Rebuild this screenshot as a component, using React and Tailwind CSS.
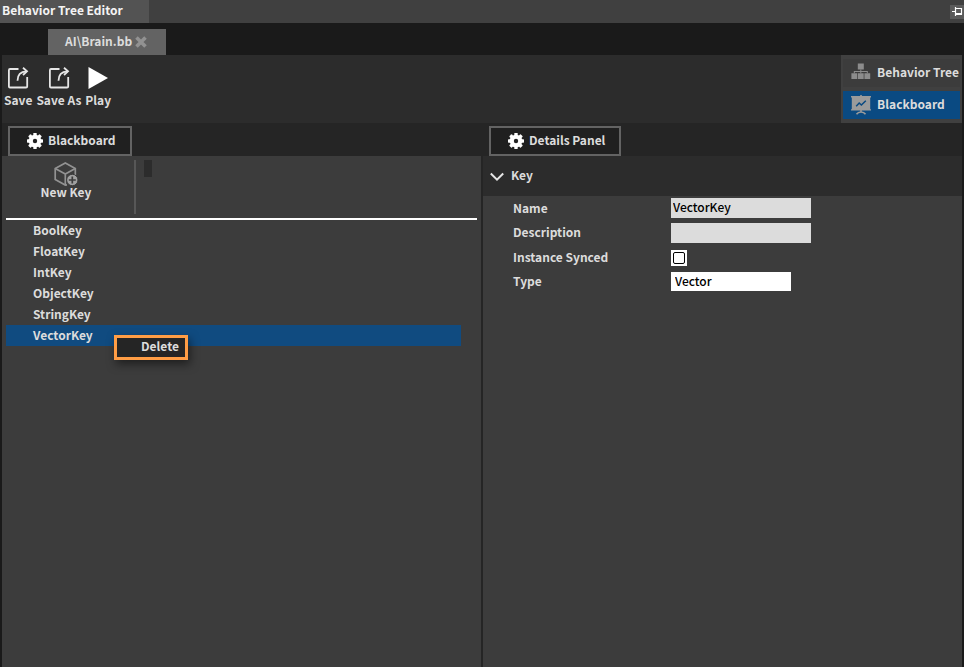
import React, { useState } from 'react'

const keys = ['BoolKey', 'FloatKey', 'IntKey', 'ObjectKey', 'StringKey', 'VectorKey']

const SaveIcon = () => (
  <svg className="w-6 h-6" viewBox="0 0 24 24" fill="none" stroke="#e6e6e6" strokeWidth="1.8">
    <path d="M12.5 3H4Q2.9 3 2.9 4.2V20.4Q2.9 21.5 4 21.5H20Q21.2 21.5 21.2 20.4V11" />
    <path d="M11.5 14.8C11.5 8.5 15 5.6 20.5 5.4" />
    <path d="M17 1.8L21 5.3L17 9" />
  </svg>
)

const PlayIcon = () => (
  <svg className="w-6 h-6" viewBox="0 0 24 24" fill="#ffffff">
    <path d="M2.5 1L22 12L2.5 23Z" />
  </svg>
)

const GearIcon = () => (
  <svg className="w-4 h-4 shrink-0" viewBox="0 0 16 16">
    <g fill="#ffffff">
      <circle cx="8" cy="8" r="6.3" />
      {[0, 45, 90, 135].map((angle) => (
        <rect key={angle} x="6.3" y="0" width="3.4" height="16" rx="0.6" transform={`rotate(${angle} 8 8)`} />
      ))}
    </g>
    <circle cx="8" cy="8" r="2.2" fill="#222222" />
  </svg>
)

const CubeIcon = () => (
  <svg className="w-6 h-6" viewBox="0 0 24 24" fill="none" stroke="#929292" strokeWidth="1.7">
    <path d="M13 22.8L11.3 23L1.2 17.5V6.5L11.3 1L21.3 6.5V13" />
    <path d="M1.2 6.5L11.3 12L21.3 6.5M11.3 12V23" />
    <circle cx="18.3" cy="18" r="5.7" fill="#a0a0a0" stroke="#3c3c3c" strokeWidth="1" />
    <path d="M18.3 14.5V21.5M14.8 18H21.8" stroke="#3c3c3c" />
  </svg>
)

const TreeIcon = () => (
  <svg className="w-5 h-5 shrink-0" viewBox="0 0 20 20" fill="#8c8c8c">
    <path d="M6.8 0.5h6v6h-6zM0.4 10.2h5.8v5.8H0.4zM6.9 10.2h5.8v5.8H6.9zM13.4 10.2h5.8v5.8h-5.8z" />
    <path d="M2.8 8h14v2.2h-1V9h-5.5v1.2h-1V9H3.8v1.2h-1zM9.3 6.5h1V8h-1z" />
  </svg>
)

const BoardIcon = () => (
  <svg className="w-5 h-5 shrink-0" viewBox="0 0 20 20" fill="none">
    <path d="M9.2 0h1.6v2h-1.6zM0 1h20v1.6h-.8v11.6H20v1.4H0v-1.4h.8V2.6H0z" fill="#9b9b9b" />
    <path d="M10 15V17M5.5 19.3Q7 17 10 17Q13 17 14.5 19.3" stroke="#9b9b9b" strokeWidth="1.6" />
    <path d="M5.2 11.2L8.2 8L10.4 10L14.8 5.8" stroke="#0a4a82" strokeWidth="1.5" />
  </svg>
)

const ToolButton = ({ label, icon: Icon }) => (
  <button className="flex flex-col items-center">
    <Icon />
    <span className="leading-5">{label}</span>
  </button>
)

const PanelTab = ({ label }) => (
  <div className="h-[33px] pt-[3px] px-1.5 bg-[#252525]">
    <h2 className="inline-flex items-center gap-[5px] h-[30px] pl-[17px] pr-3.5 border-2 border-[#636363] bg-[#202020]">
      <GearIcon />
      <span className="pb-0.5">{label}</span>
    </h2>
  </div>
)

const ModeButton = ({ label, icon: Icon, active, onClick }) => (
  <button
    onClick={onClick}
    className={`flex items-center gap-1.5 h-7 pl-2 pr-px whitespace-nowrap ${active ? 'bg-[#0a4a82]' : 'bg-[#3c3c3c]'}`}
  >
    <Icon />
    <span className="pb-0.5">{label}</span>
  </button>
)

export default function App() {
  const [mode, setMode] = useState('Blackboard')
  const [selected, setSelected] = useState('VectorKey')
  const [name, setName] = useState('VectorKey')
  const [description, setDescription] = useState('')
  const [synced, setSynced] = useState(false)

  return (
    <div className="flex flex-col h-screen bg-[#1a1a1a] text-[#dcdcdc] text-[12px] leading-5 font-bold font-['Noto_Sans_CJK_SC','Noto_Sans',sans-serif]">
      {/* Title bar */}
      <header className="flex justify-between items-center h-[23px] shrink-0 bg-[#404040]">
        <h1 className="h-full pl-0.5 pr-[26px] bg-[#535353] text-[#f4f4f4]">Behavior Tree Editor</h1>
        <button aria-label="Pin" className="w-3.5 h-3.5 bg-[#5a5a5a]">
          <svg viewBox="0 0 14 14" fill="none" stroke="#ffffff" strokeWidth="1.2">
            <path d="M2 6.5H5M5.5 2V11M5.5 3.5H11.5V9.5" />
            <path d="M5.5 9H12" strokeWidth="2" />
          </svg>
        </button>
      </header>

      {/* Document tabs */}
      <nav className="flex items-end h-8 shrink-0 pl-12">
        <div className="flex items-center gap-[3px] h-[26px] pl-[17px] pr-[19px] bg-[#636363]">
          <span className="pb-0.5">AI\Brain.bb</span>
          <button aria-label="Close tab">
            <svg className="w-3 h-3" viewBox="0 0 12 12" stroke="#929292" strokeWidth="3.6">
              <path d="M1.5 1.5L10.5 10.5M10.5 1.5L1.5 10.5" />
            </svg>
          </button>
        </div>
      </nav>

      <div className="flex flex-col flex-1 min-h-0 mx-0.5">
        {/* Toolbar */}
        <div className="flex justify-between h-[68px] shrink-0 bg-[#2c2c2c]">
          <div className="flex items-start gap-1 pt-[11px] pl-0.5">
            <ToolButton label="Save" icon={SaveIcon} />
            <ToolButton label="Save As" icon={SaveIcon} />
            <ToolButton label="Play" icon={PlayIcon} />
          </div>
          <div className="flex flex-col gap-1 px-0.5 py-1 bg-[#404040]">
            <ModeButton
              label="Behavior Tree"
              icon={TreeIcon}
              active={mode === 'Behavior Tree'}
              onClick={() => setMode('Behavior Tree')}
            />
            <ModeButton
              label="Blackboard"
              icon={BoardIcon}
              active={mode === 'Blackboard'}
              onClick={() => setMode('Blackboard')}
            />
          </div>
        </div>

        <main className="grid grid-cols-[481fr_479fr] flex-1 min-h-0 bg-[#3c3c3c]">
          {/* Blackboard keys */}
          <section className="flex flex-col">
            <PanelTab label="Blackboard" />
            <div className="flex flex-col flex-1 px-1 border-r-2 border-[#252525]">
              <div className="flex items-start gap-2 h-16 pt-1 shrink-0 border-b-2 border-white">
                <button className="flex flex-col items-center w-[130px] h-[54px] pt-0.5 pr-2 border-r-2 border-[#575757]">
                  <CubeIcon />
                  <span className="leading-3">New Key</span>
                </button>
                <div className="w-2 h-[17px] bg-[#2c2c2c]" />
              </div>
              <ul className="pr-4">
                {keys.map((key) => (
                  <li key={key} className="relative">
                    <button
                      onClick={() => setSelected(key)}
                      className={`block w-full h-[21px] pl-[27px] pb-0.5 text-left leading-[19px] ${selected === key ? 'bg-[#104b80]' : ''}`}
                    >
                      {key}
                    </button>
                    {selected === key && (
                      <div className="absolute left-[108px] top-2.5 z-10 border-3 border-[#ff9d45] bg-[#252525] shadow-[2px_4px_10px_rgba(0,0,0,0.5)]">
                        <button className="block h-[19px] pl-6 pr-1.5 pb-1 leading-[14px]">Delete</button>
                      </div>
                    )}
                  </li>
                ))}
              </ul>
            </div>
          </section>

          {/* Details of the selected key */}
          <section className="flex flex-col">
            <PanelTab label="Details Panel" />
            <button className="flex items-center gap-[7px] h-10 px-[7px] bg-[#2c2c2c]">
              <svg className="w-3.5 h-3.5" viewBox="0 0 14 14" fill="none" stroke="#e6e6e6" strokeWidth="2">
                <path d="M0.8 4.5L7 10.7L13.2 4.5" />
              </svg>
              <span className="pb-0.5">Key</span>
            </button>
            <div className="grid grid-cols-[158px_1fr] grid-rows-[24px_26px_24px_23px] items-center pl-[30px]">
              <label htmlFor="key-name">Name</label>
              <input
                id="key-name"
                value={name}
                onChange={(e) => setName(e.target.value)}
                className="w-[140px] h-5 px-0.5 pb-0.5 bg-[#dcdcdc] text-black font-medium outline-none"
              />
              <label htmlFor="key-description" className="pb-0.5">Description</label>
              <input
                id="key-description"
                value={description}
                onChange={(e) => setDescription(e.target.value)}
                className="w-[140px] h-5 px-0.5 pb-0.5 bg-[#dcdcdc] text-black font-medium outline-none"
              />
              <label htmlFor="key-synced" className="pb-0.5">Instance Synced</label>
              <span className="flex items-center justify-center w-4 h-4 bg-white">
                <input
                  id="key-synced"
                  type="checkbox"
                  checked={synced}
                  onChange={(e) => setSynced(e.target.checked)}
                  className="appearance-none w-3 h-3 rounded-xs border border-black bg-white checked:bg-[#0a4a82]"
                />
              </span>
              <label htmlFor="key-type" className="pb-0.5">Type</label>
              <select
                id="key-type"
                defaultValue="Vector"
                className="appearance-none w-[120px] h-[19px] px-1 pb-0.5 leading-4 bg-white text-black font-medium outline-none"
              >
                <option>Vector</option>
                <option>Bool</option>
                <option>Float</option>
                <option>Int</option>
                <option>Object</option>
                <option>String</option>
              </select>
            </div>
          </section>
        </main>
      </div>
    </div>
  )
}
